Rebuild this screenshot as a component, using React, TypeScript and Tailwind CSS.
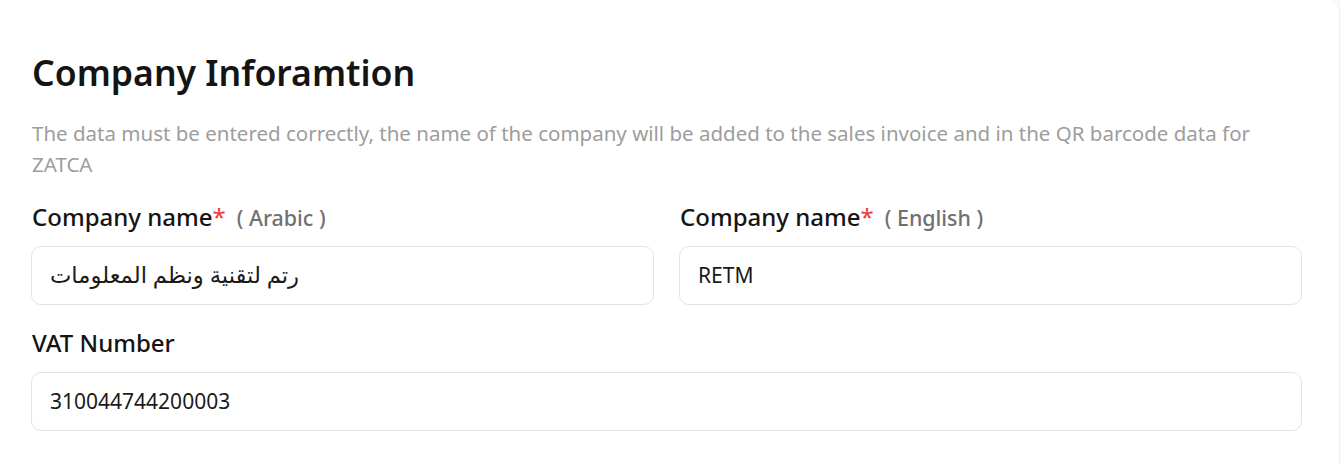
import React from "react";

const font = { fontFamily: '"Noto Sans", "DejaVu Sans", sans-serif' };

function Field({ label, hint, required, value, rtl }: { label: string; hint?: string; required?: boolean; value: string; rtl?: boolean }) {
  return (
    <div className="flex flex-col">
      <div className="flex items-baseline h-[32px] leading-[32px] pl-[1px]">
        <span className="text-[24px] font-medium text-[#141414]">{label}</span>
        {required && <span className="text-[24px] text-[#ef3b3b]">*</span>}
        {hint && <span className="ml-[11px] text-[21.4px] font-medium text-[#707070]">( {hint} )</span>}
      </div>
      <div className="mt-[13px] h-[59px] rounded-[10px] border border-[#e3e3e3] bg-white flex items-center px-[18px]">
        <span dir={rtl ? "rtl" : "ltr"} className={rtl ? "text-[22.7px] text-[#1a1a1a]" : "text-[21px] text-[#1a1a1a]"}>{value}</span>
      </div>
    </div>
  );
}

export default function App() {
  return (
    <div className="w-[1341px] h-[463px] bg-[#fafafa] overflow-hidden" style={font}>
      <div className="w-[1340px] h-[520px] bg-white rounded-r-[12px] border-r border-[#ececec] pl-[31px] pr-[37px] pt-[44px]">
        <h1 className="text-[35.6px] font-semibold text-[#141414] leading-[56px] pl-[1px]">Company Inforamtion</h1>
        <p className="mt-[18px] text-[20.5px] leading-[31px] text-[#9d9d9d] pr-[20px] pl-[1px]">
          The data must be entered correctly, the name of the company will be added to the sales invoice and in the QR barcode data for ZATCA
        </p>
        <div className="mt-[21px] grid grid-cols-2 gap-x-[25px]">
          <Field label="Company name" required hint="Arabic" value="رتم لتقنية ونظم المعلومات" rtl />
          <Field label="Company name" required hint="English" value="RETM" />
        </div>
        <div className="mt-[22px]">
          <Field label="VAT Number" value="310044744200003" />
        </div>
      </div>
    </div>
  );
}
